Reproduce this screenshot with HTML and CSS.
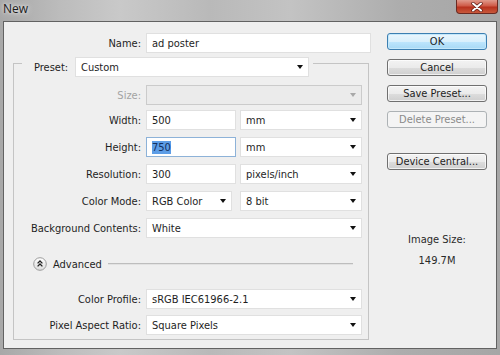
FILE: index.html
```html
<!DOCTYPE html>
<html lang="en">
  <head>
    <meta charset="UTF-8" />
    <title>New</title>
    <link rel="stylesheet" href="styles.css">
  </head>
  <body>
    <div class="window">
      <div class="titlebar">
        <span class="title">New</span>
        <span class="close">
          <svg width="12" height="10" viewBox="0 0 12 10">
            <path d="M2 1.5 L10 8.5 M10 1.5 L2 8.5" stroke="#5a1a14" stroke-width="3.4" stroke-linecap="round" />
            <path d="M2 1.5 L10 8.5 M10 1.5 L2 8.5" stroke="#fff" stroke-width="2" stroke-linecap="round" />
          </svg>
        </span>
      </div>

      <div class="client">
        <div class="form">
          <div class="name-row">
            <span class="label">Name:</span>
            <div class="field">ad poster</div>
          </div>

          <fieldset class="group">
            <legend class="preset">
              <span class="preset-label">Preset:</span>
              <div class="select preset-select">Custom<i class="arrow"></i></div>
            </legend>

            <div class="row row-size">
              <span class="label disabled">Size:</span>
              <div class="select disabled"><i class="arrow"></i></div>
            </div>
            <div class="row row-width">
              <span class="label">Width:</span>
              <div class="pair">
                <div class="field">500</div>
                <div class="select">mm<i class="arrow"></i></div>
              </div>
            </div>
            <div class="row">
              <span class="label">Height:</span>
              <div class="pair">
                <div class="field focus"><span class="sel">750</span></div>
                <div class="select">mm<i class="arrow"></i></div>
              </div>
            </div>
            <div class="row">
              <span class="label">Resolution:</span>
              <div class="pair">
                <div class="field">300</div>
                <div class="select">pixels/inch<i class="arrow"></i></div>
              </div>
            </div>
            <div class="row">
              <span class="label">Color Mode:</span>
              <div class="pair mode">
                <div class="select">RGB Color<i class="arrow"></i></div>
                <div class="select">8 bit<i class="arrow"></i></div>
              </div>
            </div>
            <div class="row">
              <span class="label">Background Contents:</span>
              <div class="select">White<i class="arrow"></i></div>
            </div>

            <div class="advanced">
              <svg class="adv-icon" width="14" height="14" viewBox="0 0 14 14">
                <defs>
                  <linearGradient id="advg" x1="0" y1="0" x2="0" y2="1">
                    <stop offset="0" stop-color="#ffffff" />
                    <stop offset="1" stop-color="#dcdcdc" />
                  </linearGradient>
                </defs>
                <circle cx="7" cy="7" r="6.3" fill="url(#advg)" stroke="#9c9c9c" />
                <path d="M4.6 6.4 L7 4 L9.4 6.4 M4.6 9.4 L7 7 L9.4 9.4" fill="none" stroke="#222" stroke-width="1.3" />
              </svg>
              <span>Advanced</span>
              <span class="rule"></span>
            </div>

            <div class="row row-profile">
              <span class="label">Color Profile:</span>
              <div class="select">sRGB IEC61966-2.1<i class="arrow"></i></div>
            </div>
            <div class="row row-pixel">
              <span class="label">Pixel Aspect Ratio:</span>
              <div class="select">Square Pixels<i class="arrow"></i></div>
            </div>
          </fieldset>
        </div>

        <div class="side">
          <div class="btn default">OK</div>
          <div class="btn">Cancel</div>
          <div class="btn">Save Preset...</div>
          <div class="btn off">Delete Preset...</div>
          <div class="btn central">Device Central...</div>
          <div class="image-size">
            <p>Image Size:</p>
            <p class="size-value">149.7M</p>
          </div>
        </div>
      </div>
    </div>
  </body>
</html>
```

FILE: styles.css
```css
body {
  margin: 0;
  overflow: hidden;
  font-family: "DejaVu Sans Condensed", "DejaVu Sans", sans-serif;
  font-size: 11px;
  color: #1e1e1e;
}

.window {
  width: 500px;
  height: 355px;
  box-sizing: border-box;
  padding: 0 3px 6px 3px;
  background: linear-gradient(to right, #a8a8a8 0, #bcbcbc 12%, #c9c9c9 24%, #b9b9b9 42%, #c3c3c3 58%, #adadad 80%, #a6a6a6 100%);
  display: flex;
  flex-direction: column;
}

.titlebar {
  height: 21px;
  flex: none;
  display: flex;
  justify-content: space-between;
  align-items: flex-start;
}
.title {
  font-family: "Open Sans", sans-serif;
  font-size: 12px;
  line-height: 18px;
  color: #1a1a1a;
  text-shadow: 0 0 6px #e8e8e8, 0 0 3px #e8e8e8;
}
.close {
  width: 42px;
  height: 14px;
  margin-right: -1px;
  box-sizing: border-box;
  border: 1px solid #6a2a22;
  border-top: none;
  border-radius: 0 0 4px 4px;
  background: linear-gradient(#e09a8c 0, #cf5b48 45%, #b8321e 55%, #c8593c 100%);
  display: flex;
  justify-content: center;
  align-items: center;
}

.client {
  flex: 1;
  border: 1px solid #626262;
  background: #efefef;
  display: grid;
  grid-template-columns: 383px 100px;
}

/* left column */
.name-row {
  margin-top: 11px;
  display: grid;
  grid-template-columns: 137px 225px;
  column-gap: 5px;
  align-items: center;
}
.label {
  text-align: right;
  white-space: nowrap;
}
.label.disabled {
  color: #a3a3a3;
}

.field,
.select {
  height: 20px;
  box-sizing: border-box;
  background: #fff;
  border: 1px solid #e0e0e0;
  padding: 0 5px 0 5px;
  display: flex;
  align-items: center;
  white-space: nowrap;
}
.field.focus {
  border-color: #8db2d8;
}
.sel {
  background: #5d9de6;
  color: #13305f;
}
.select .arrow {
  margin-left: auto;
  width: 0;
  height: 0;
  border-left: 3px solid transparent;
  border-right: 3px solid transparent;
  border-top: 4px solid #111;
}
.select.disabled {
  background: #ebebeb;
  border-color: #cbcbcb;
}
.select.disabled .arrow {
  border-top-color: #a8a8a8;
}

.group {
  margin: -4px 0 0 9px;
  width: 356px;
  box-sizing: border-box;
  min-inline-size: 0;
  border: 1px solid #c4c4c4;
  padding: 8px 6px 4px 0;
}
.preset {
  margin-left: 8px;
  padding: 8px 4px 0 12px;
  display: flex;
  align-items: center;
  gap: 5px;
}
.preset-label {
  width: 36px;
}
.preset-select {
  width: 234px;
}

.row {
  display: grid;
  grid-template-columns: 127px 216px;
  column-gap: 5px;
  align-items: center;
  margin-top: 7px;
}
.row-size {
  margin-top: 0;
}
.row-width {
  margin-top: 5px;
}
.row-profile {
  margin-top: 15px;
}
.row-pixel {
  margin-top: 6px;
}

.pair {
  display: grid;
  grid-template-columns: 90px 122px;
  column-gap: 4px;
}
.pair.mode {
  grid-template-columns: 86px 122px;
  column-gap: 8px;
}

.advanced {
  margin: 16px 0 0 19px;
  height: 20px;
  display: flex;
  align-items: center;
  gap: 6px;
}
.adv-icon {
  flex: none;
}
.rule {
  flex: 1;
  margin: 0 9px 0 0;
  height: 0;
  border-top: 1px solid #bdbdbd;
  border-bottom: 1px solid #e2e2e2;
}

/* right column */
.side {
  padding-top: 11px;
  display: flex;
  flex-direction: column;
  gap: 9px;
}
.btn {
  height: 17px;
  box-sizing: border-box;
  border: 1px solid #707070;
  border-radius: 3px;
  background: linear-gradient(#f3f3f3 0, #ebebeb 50%, #dddddd 51%, #cfcfcf 100%);
  box-shadow: inset 0 0 0 1px rgba(255, 255, 255, 0.7);
  display: flex;
  justify-content: center;
  align-items: center;
  white-space: nowrap;
}
.btn.default {
  border-color: #3c7fb1;
  background: linear-gradient(#eaf6fd 0, #d9f0fc 50%, #bee6fd 51%, #a7d9f5 100%);
  box-shadow: inset 0 0 0 1px #c4e8fb;
}
.btn.off {
  border-color: #adb2b5;
  background: #f4f4f4;
  box-shadow: none;
  color: #8a8a8a;
}
.btn.central {
  margin-top: 16px;
}

.image-size {
  margin-top: 54px;
  text-align: center;
  color: #2a2a2a;
}
.image-size p {
  margin: 0;
  line-height: 13px;
}
.image-size .size-value {
  margin-top: 8px;
}
```
